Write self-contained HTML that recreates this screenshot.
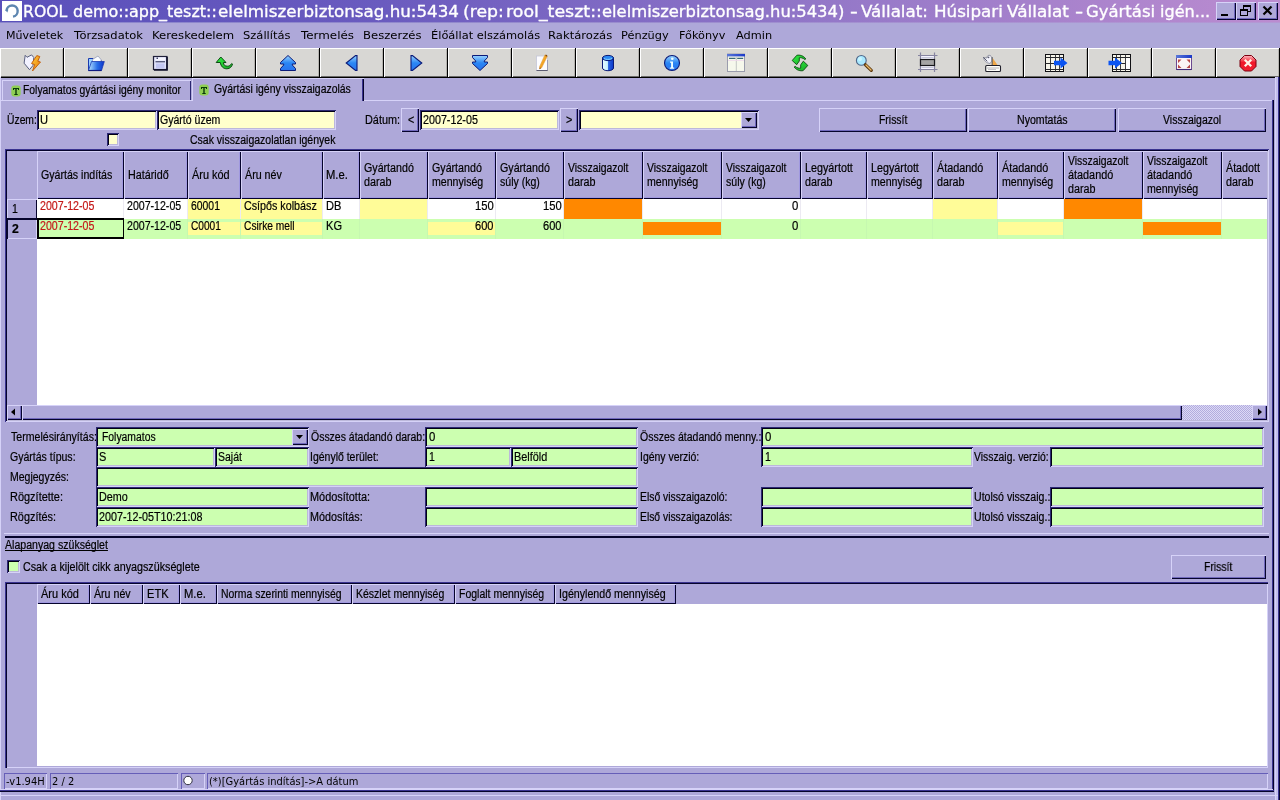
<!DOCTYPE html>
<html lang="hu"><head><meta charset="utf-8"><title>ROOL demo</title>
<style>
html,body{margin:0;padding:0}
body{width:1280px;height:800px;overflow:hidden;background:#aea8d9;position:relative;font:12px/14px "Liberation Sans",sans-serif;color:#000}
.a{position:absolute;box-sizing:border-box}
.t{position:absolute;white-space:nowrap;transform-origin:0 0;-webkit-text-stroke:.2px currentColor}
#w{position:absolute;left:0;top:0;width:1280px;height:800px;will-change:transform}
.m{position:absolute;white-space:nowrap;font:11px/14px "DejaVu Sans","Liberation Sans",sans-serif;transform-origin:0 0}
.s{position:absolute;white-space:nowrap;font:11px/14px "DejaVu Sans","Liberation Sans",sans-serif;transform:scaleX(.9);transform-origin:0 0}
.sunk{box-shadow:inset 1px 1px 0 #2c2874,inset -1px -1px 0 #d6d2f8,inset 2px 2px 0 #020014,inset -2px -2px 0 #bcb8da}
.btn{box-shadow:inset 1px 1px 0 #d6d2f8,inset -1px -1px 0 #06042c,inset -2px -2px 0 #7068bc}
.hd{box-shadow:inset 1px 1px 0 #d6d2f8,inset -1px -1px 0 #06042c,inset -2px -2px 0 #a098e0}
.tb{background:#d8d7d4;box-shadow:inset 0 -1px 0 #000,inset -1px 0 0 #000,inset 1px 1px 0 #fff,inset 0 -2px 0 #6a6a68,inset -2px 0 0 #b4b2ae}
.tb svg{position:absolute}
svg{display:block}
.ti{position:absolute;white-space:nowrap;color:#fff;font:16.5px/20px "DejaVu Sans","Liberation Sans",sans-serif;transform-origin:0 0;-webkit-text-stroke:.35px #fff}
</style></head>
<body>
<div id="w">
<div class="a" style="left:0px;top:0px;width:1280px;height:22px;background:linear-gradient(90deg,#5a50bb 0%,#6a5bbf 30%,#9478c8 65%,#bb8cd0 100%);"></div>
<div class="a" style="left:2px;top:1px;width:20px;height:20px;background:#fff;"><svg width="20" height="20" viewBox="0 0 20 20"><path d="M4.5 9.5A5.6 5.6 0 1 1 11 15.6" fill="none" stroke="#5d86b0" stroke-width="2.4"/><path d="M3 9l3.4-.4-1 3z" fill="#5d86b0"/></svg></div>
<div class="a" style="left:0;top:0;width:1216px;height:22px">
<span class="ti" style="left:22.53px;top:2px;transform:scaleX(0.9511);">ROOL</span>
<span class="ti" style="left:73.13px;top:2px;transform:scaleX(0.9671);">demo::app_teszt::</span>
<span class="ti" style="left:217.59px;top:2px;transform:scaleX(1.0127);">elelmiszerbiztonsag.hu:5434</span>
<span class="ti" style="left:462.79px;top:2px;transform:scaleX(1.0476);">(rep:</span>
<span class="ti" style="left:506.22px;top:2px;transform:scaleX(1.0543);">rool_teszt::</span>
<span class="ti" style="left:602.01px;top:2px;transform:scaleX(0.9913);">elelmiszerbiztonsag.hu:5434)</span>
<span class="ti" style="left:850.32px;top:2px;transform:scaleX(1.3103);">-</span>
<span class="ti" style="left:861.45px;top:2px;transform:scaleX(1.0117);">Vállalat:</span>
<span class="ti" style="left:933.73px;top:2px;transform:scaleX(1.0123);">Húsipari</span>
<span class="ti" style="left:1007.45px;top:2px;transform:scaleX(1.0208);">Vállalat</span>
<span class="ti" style="left:1075.37px;top:2px;transform:scaleX(1.3793);">-</span>
<span class="ti" style="left:1086.10px;top:2px;transform:scaleX(0.9978);">Gyártási</span>
<span class="ti" style="left:1159.54px;top:2px;transform:scaleX(0.9761);">igén...</span>
</div>
<div class="a btn" style="left:1216px;top:2px;width:20px;height:18px;background:#aea8d9;"><svg width="20" height="18" viewBox="0 0 20 18"><rect x="5" y="12" width="7" height="2" fill="#000"/></svg></div>
<div class="a btn" style="left:1236px;top:2px;width:20px;height:18px;background:#aea8d9;"><svg width="20" height="18" viewBox="0 0 20 18"><rect x="7.5" y="3.5" width="7" height="6" fill="none" stroke="#000"/><rect x="7" y="3" width="8" height="2" fill="#000"/><rect x="4.5" y="7.5" width="7" height="6" fill="#aea8d9" stroke="#000"/><rect x="4" y="7" width="8" height="2" fill="#000"/></svg></div>
<div class="a btn" style="left:1258px;top:2px;width:20px;height:18px;background:#aea8d9;"><svg width="20" height="18" viewBox="0 0 20 18"><path d="M5.5 4.5l8 8M13.5 4.5l-8 8" stroke="#000" stroke-width="2.2" fill="none"/></svg></div>
<span class="m" style="left:5.90px;top:29px;transform:scaleX(1.0036);">Műveletek</span>
<span class="m" style="left:74.25px;top:29px;transform:scaleX(1.0448);">Törzsadatok</span>
<span class="m" style="left:152.08px;top:29px;transform:scaleX(1.0638);">Kereskedelem</span>
<span class="m" style="left:243.02px;top:29px;transform:scaleX(1.0464);">Szállítás</span>
<span class="m" style="left:301.25px;top:29px;transform:scaleX(1.0825);">Termelés</span>
<span class="m" style="left:363.34px;top:29px;transform:scaleX(1.0568);">Beszerzés</span>
<span class="m" style="left:430.61px;top:29px;transform:scaleX(1.0376);">Élőállat elszámolás</span>
<span class="m" style="left:548.34px;top:29px;transform:scaleX(1.0557);">Raktározás</span>
<span class="m" style="left:621.36px;top:29px;transform:scaleX(1.0324);">Pénzügy</span>
<span class="m" style="left:678.88px;top:29px;transform:scaleX(1.0227);">Főkönyv</span>
<span class="m" style="left:736.15px;top:29px;transform:scaleX(1.0294);">Admin</span>
<svg width="0" height="0" style="position:absolute"><defs>
<linearGradient id="gb" x1="0" y1="0" x2="0" y2="1"><stop offset="0" stop-color="#9ad4ff"/><stop offset=".5" stop-color="#2a86f4"/><stop offset="1" stop-color="#2a74ee"/></linearGradient>
<linearGradient id="gg" x1="0" y1="0" x2="1" y2="1"><stop offset="0" stop-color="#30f040"/><stop offset="1" stop-color="#18a828"/></linearGradient>
<linearGradient id="go" x1="0" y1="0" x2="1" y2="1"><stop offset="0" stop-color="#ffd040"/><stop offset="1" stop-color="#e87808"/></linearGradient>
<linearGradient id="gr" x1="0" y1="0" x2="0" y2="1"><stop offset="0" stop-color="#ffb8c0"/><stop offset=".45" stop-color="#f01828"/><stop offset="1" stop-color="#f02030"/></linearGradient>
<linearGradient id="gf" x1="0" y1="0" x2="1" y2="0"><stop offset="0" stop-color="#b8e4ff"/><stop offset=".55" stop-color="#2a70e8"/><stop offset="1" stop-color="#0a30c8"/></linearGradient>
<linearGradient id="gc" x1="0" y1="0" x2="1" y2="0"><stop offset="0" stop-color="#e8faff"/><stop offset=".45" stop-color="#c8f0ff"/><stop offset=".55" stop-color="#2a60e0"/><stop offset="1" stop-color="#0a38c8"/></linearGradient>
<linearGradient id="gt" x1="0" y1="0" x2="1" y2="0"><stop offset="0" stop-color="#5a78d8"/><stop offset="1" stop-color="#1a38c8"/></linearGradient>
</defs></svg>
<div class="a tb" style="left:0px;top:48px;width:64px;height:30px;"><svg width="64" height="29" viewBox="0 48 64 29" style="left:0;top:0"><path d="M25.200 55.300l1.800 2 4.600-2.400 2.200 2.600-0.900 8.100-3.400 4.100-5.400-6.500z" fill="#f2f2ff" stroke="#5a6080" stroke-width="1"/><path d="M36.800 55.600l3 .9-2 4.700 2.700.800-8 9 2.200-6.500-3.200-1z" fill="url(#go)" stroke="#c05808" stroke-width=".9"/></svg></div>
<div class="a tb" style="left:64px;top:48px;width:64px;height:30px;"><svg width="64" height="29" viewBox="64 48 64 29" style="left:0;top:0"><path d="M88.500 58.500h4.500l1 1.500h7v10.500h-12.500z" fill="#9ad0ff" stroke="#1a3ab0"/><path d="M92.500 59.500l5.500-3.500 3 3.500v3h-8.500z" fill="#fafcff" stroke="#8a90b0" stroke-width=".7"/><path d="M91.500 61.500h12.800l-2.800 9h-13z" fill="url(#gf)" stroke="#1a3ab0" stroke-width=".8"/><path d="M88.500 70.500h13" stroke="#101a80" stroke-width="1.200"/></svg></div>
<div class="a tb" style="left:128px;top:48px;width:64px;height:30px;"><svg width="64" height="29" viewBox="128 48 64 29" style="left:0;top:0"><rect x="153.500" y="56.500" width="13.500" height="13" fill="#dfe2fa" stroke="#20203a" stroke-width="1.200"/><path d="M167 57v13h-13" fill="none" stroke="#10102a" stroke-width="1.600"/><rect x="155.500" y="57.500" width="9.500" height="3" fill="#f6f6ff"/><rect x="155.500" y="61" width="9.500" height="1.400" fill="#5a5e80"/><rect x="156" y="63.500" width="8.500" height="5" fill="#c2c6f2"/><rect x="156.500" y="57.500" width="1.500" height="1.500" fill="#40446a"/></svg></div>
<div class="a tb" style="left:192px;top:48px;width:64px;height:30px;"><svg width="64" height="29" viewBox="192 48 64 29" style="left:0;top:0"><path d="M220.800 57l5.200 5.500h-2.600c.2 2.600 1.600 3.700 4 3.700 1.800 0 3-.9 4.300-2.700l.8.600c-.6 2.600-2.600 4.700-5.600 4.700-3.600 0-5.900-2.300-6.600-6.300h-4.100z" fill="url(#gg)" stroke="#0a4a10" stroke-width="1"/></svg></div>
<div class="a tb" style="left:256px;top:48px;width:64px;height:30px;"><svg width="64" height="29" viewBox="256 48 64 29" style="left:0;top:0"><path d="M288 55.500l7.500 7v1.500h-3.200v1l3.200 3.500v2h-15v-2l3.200-3.500v-1h-3.200v-1.500z" fill="url(#gb)" stroke="#0a1a78" stroke-width="1"/></svg></div>
<div class="a tb" style="left:320px;top:48px;width:64px;height:30px;"><svg width="64" height="29" viewBox="320 48 64 29" style="left:0;top:0"><path d="M357 55.600v14.800h-1.500l-9.300-7.400 9.300-7.400z" fill="url(#gb)" stroke="#0a1a78" stroke-width="1.100"/></svg></div>
<div class="a tb" style="left:384px;top:48px;width:64px;height:30px;"><svg width="64" height="29" viewBox="384 48 64 29" style="left:0;top:0"><path d="M411 55.600v14.800h1.500l9.300-7.400-9.300-7.400z" fill="url(#gb)" stroke="#0a1a78" stroke-width="1.100"/></svg></div>
<div class="a tb" style="left:448px;top:48px;width:64px;height:30px;"><svg width="64" height="29" viewBox="448 48 64 29" style="left:0;top:0"><path d="M480 70.500l-7.500-7v-1.500h3.200v-1l-3.200-3.500v-2h15v2l-3.200 3.500v1h3.200v1.500z" fill="url(#gb)" stroke="#0a1a78" stroke-width="1"/></svg></div>
<div class="a tb" style="left:512px;top:48px;width:64px;height:30px;"><svg width="64" height="29" viewBox="512 48 64 29" style="left:0;top:0"><rect x="536.500" y="56" width="11" height="14.500" fill="#fcfcff" stroke="#c4c6d8" stroke-width=".8"/><path d="M536.500 70.500h11.500" stroke="#5a5a70" stroke-width="1"/><path d="M547.500 60v10.500" stroke="#9a9cb8" stroke-width="1"/><path d="M545 54.800l2.400 1.200-5.800 11.800-2 1.200.1-2.600z" fill="url(#go)" stroke="#e09838" stroke-width=".6"/><path d="M539.600 69l.2-1.600 1.200.6z" fill="#5a3010"/><circle cx="546.300" cy="55.600" r=".9" fill="#7a4818"/></svg></div>
<div class="a tb" style="left:576px;top:48px;width:64px;height:30px;"><svg width="64" height="29" viewBox="576 48 64 29" style="left:0;top:0"><path d="M602.500 58v10c0 1.600 2.400 2.700 5.500 2.700s5.500-1.100 5.500-2.700v-10z" fill="url(#gc)" stroke="#0a1a78" stroke-width="1"/><ellipse cx="608" cy="58" rx="5.500" ry="2.600" fill="#2a88f4" stroke="#0a1a78" stroke-width="1"/><path d="M604 58.500c1.500 1.200 6 1.300 8 0" stroke="#8ad0ff" stroke-width="1" fill="none"/></svg></div>
<div class="a tb" style="left:640px;top:48px;width:64px;height:30px;"><svg width="64" height="29" viewBox="640 48 64 29" style="left:0;top:0"><circle cx="672" cy="63" r="7.500" fill="url(#gb)" stroke="#0a1a78" stroke-width="1.100"/><path d="M670 61.500h3v6h1.200v1.200h-4.400v-1.200h1.300v-4.800h-1.100z" fill="#f0ffff"/><circle cx="672.300" cy="58.800" r="1.300" fill="#f0ffff"/></svg></div>
<div class="a tb" style="left:704px;top:48px;width:64px;height:30px;"><svg width="64" height="29" viewBox="704 48 64 29" style="left:0;top:0"><rect x="727.500" y="54" width="17" height="17.500" fill="#f6f8ec" stroke="#9a9cac" stroke-width="1"/><rect x="727" y="54" width="18" height="2.400" fill="url(#gt)"/><path d="M729 58.400h6.500M737.200 58.400h6" stroke="#3a6a78" stroke-width="1.200"/><path d="M736.300 57v14" stroke="#b8baba" stroke-width=".8"/><path d="M728 60.500h16" stroke="#f0d8ec" stroke-width=".8"/></svg></div>
<div class="a tb" style="left:768px;top:48px;width:64px;height:30px;"><svg width="64" height="29" viewBox="768 48 64 29" style="left:0;top:0"><path d="M792.200 60.500l4.600-5.200c2.600-.6 6.600.2 9 3.600l-.9.700c-2-1.800-4.200-2.200-5.600-1.800l0 3.200-2.600 3.700z" fill="url(#gg)" stroke="#0a4a10" stroke-width=".9"/><path d="M807.800 65.400l-4.600 5.200c-2.600.6-6.600-.2-9-3.600l.9-.7c2 1.800 4.200 2.200 5.600 1.800l0-3.200 2.600-3.700z" fill="url(#gg)" stroke="#0a4a10" stroke-width=".9"/></svg></div>
<div class="a tb" style="left:832px;top:48px;width:64px;height:30px;"><svg width="64" height="29" viewBox="832 48 64 29" style="left:0;top:0"><circle cx="861.300" cy="60.400" r="4.900" fill="#a8e8ff" stroke="#50688a" stroke-width="1.100"/><circle cx="860" cy="59" r="2" fill="#d8fbff" opacity=".7"/><path d="M865.500 64.800l5.800 5.600" stroke="#5a3408" stroke-width="3.200" stroke-linecap="round"/><path d="M866 65l5 4.900" stroke="#e8b868" stroke-width="1.400" stroke-linecap="round"/></svg></div>
<div class="a tb" style="left:896px;top:48px;width:64px;height:30px;"><svg width="64" height="29" viewBox="896 48 64 29" style="left:0;top:0"><rect x="921" y="56" width="13.500" height="13.500" fill="#f4f4ff"/><path d="M920.500 52.500v19.500M934.500 52.500v19.500M918 55.500h19.500M918 69.500h19.500" stroke="#8684a0" stroke-width="1.200"/><path d="M921.500 57.500h12M921.500 67.500h12" stroke="#c8c8dc" stroke-width="1"/><rect x="920.500" y="59.500" width="14" height="6" fill="#a4a4a4" stroke="#18181c" stroke-width="1.200"/></svg></div>
<div class="a tb" style="left:960px;top:48px;width:64px;height:30px;"><svg width="64" height="29" viewBox="960 48 64 29" style="left:0;top:0"><path d="M983.500 57.500c.5 3 2.500 5.500 6.500 6 2-1.500 2.500-5 .5-8-2.500-.8-3.500.5-3.500 2.500z" fill="#f4f4fc" stroke="#8a8c9c" stroke-width=".9"/><path d="M983.300 57.300l4 4" stroke="#5a5c6c" stroke-width="1"/><circle cx="988.500" cy="57.300" r=".9" fill="#5a5c70"/><path d="M992.300 57.500l5.200 7.500h-5.800z" fill="#f0a848"/><path d="M992.200 57v8" stroke="#5a6068" stroke-width="1"/><rect x="985.700" y="65.500" width="14.800" height="6" rx="1" fill="#fffffa" stroke="#20202a" stroke-width="1.100"/><path d="M987.500 68h11" stroke="#6a6a7a" stroke-width="1" stroke-dasharray="1 1"/><path d="M988.500 69.500h7" stroke="#8a8a9a" stroke-width="1" stroke-dasharray="1 1"/></svg></div>
<div class="a tb" style="left:1024px;top:48px;width:64px;height:30px;"><svg width="64" height="29" viewBox="1024 48 64 29" style="left:0;top:0"><rect x="1045.500" y="54.500" width="18" height="17" fill="#f6f4ea" stroke="#101014" stroke-width="1"/><path d="M1045.500 57.500h18M1045.500 63.500h18M1045.500 69.500h18" stroke="#28282c" stroke-width="1"/><path d="M1050.500 54.500v17M1055.500 54.500v17M1059.500 54.500v17" stroke="#28282c" stroke-width=".9"/><path d="M1054 60.800h6.500v-3.300l7 5.500-7 5.500v-3.300h-6.500z" fill="#0a54f2"/></svg></div>
<div class="a tb" style="left:1088px;top:48px;width:64px;height:30px;"><svg width="64" height="29" viewBox="1088 48 64 29" style="left:0;top:0"><rect x="1112.500" y="54.500" width="18" height="17" fill="#f6f4ea" stroke="#101014" stroke-width="1"/><path d="M1112.500 57.500h18M1112.500 63.500h13M1112.500 69.500h18" stroke="#28282c" stroke-width="1"/><path d="M1116.500 54.500v17M1120.500 54.500v17M1125.500 54.500v17" stroke="#28282c" stroke-width=".9"/><rect x="1126" y="58" width="4" height="11" fill="#fff"/><path d="M1108.500 60.800h6.500v-3.300l7 5.500-7 5.500v-3.300h-6.500z" fill="#0a54f2"/></svg></div>
<div class="a tb" style="left:1152px;top:48px;width:64px;height:30px;"><svg width="64" height="29" viewBox="1152 48 64 29" style="left:0;top:0"><rect x="1176.500" y="55.500" width="15" height="14" fill="#fcf4f6" stroke="#6a4a90" stroke-width="1"/><rect x="1176" y="55" width="16" height="3" fill="url(#gt)"/><path d="M1178 59.500h3.500l-3.500 3.500zM1190 59.500h-3.500l3.500 3.500zM1178 68h3.500l-3.500-3.500zM1190 68h-3.500l3.500-3.500z" fill="#b84848"/><path d="M1176.500 69.500h15" stroke="#402878" stroke-width="1.100"/></svg></div>
<div class="a tb" style="left:1216px;top:48px;width:64px;height:30px;"><svg width="64" height="29" viewBox="1216 48 64 29" style="left:0;top:0"><path d="M1244.500 55.500h7l4.500 4.500v6.500l-4.500 4.500h-7l-4.500-4.500v-6.500z" fill="url(#gr)" stroke="#7a0010" stroke-width="1"/><path d="M1244.800 59.800l6.400 6.400M1251.200 59.800l-6.400 6.400" stroke="#fff4e8" stroke-width="2.300"/></svg></div>
<!--BODY-->
<div class="a" style="left:0px;top:22px;width:1280px;height:1px;background:linear-gradient(90deg,#8a84cc 0%,#9088cc 30%,#a290d0 65%,#b498d4 100%);"></div>
<div class="a" style="left:0px;top:77px;width:1px;height:723px;background:#d6d2f8;"></div>
<div class="a" style="left:1275px;top:77px;width:1px;height:723px;background:#d6d2f8;"></div>
<div class="a" style="left:1276px;top:77px;width:2px;height:723px;background:#c2beec;"></div>
<div class="a" style="left:1278px;top:77px;width:1px;height:723px;background:#3a3390;"></div>
<div class="a" style="left:1279px;top:77px;width:1px;height:723px;background:#06042c;"></div>
<div class="a" style="left:0px;top:100px;width:1273px;height:1px;background:#d6d2f8;"></div>
<div class="a" style="left:1272px;top:100px;width:1px;height:691px;background:#3a3390;"></div>
<div class="a" style="left:1273px;top:100px;width:1px;height:691px;background:#06042c;"></div>
<div class="a" style="left:0px;top:789px;width:1273px;height:1px;background:#d6d2f8;"></div>
<div class="a" style="left:0px;top:790px;width:1274px;height:1px;background:#3a3390;"></div>
<div class="a" style="left:0px;top:791px;width:1274px;height:1px;background:#06042c;"></div>
<div class="a" style="left:0px;top:795px;width:1278px;height:1px;background:#d6d2f8;"></div>
<div class="a" style="left:2px;top:80px;width:189px;height:20px;background:#aea8d9;box-shadow:inset 1px 1px 0 #d6d2f8,inset -1px 0 0 #2a2670;"></div>
<div class="a" style="left:11px;top:85px;width:10px;height:12px;"><svg width="10" height="12" viewBox="0 0 10 12"><rect x=".3" y=".5" width="9.400" height="11" rx="3" fill="#8fce54"/><path d="M2 3h6v2h-1v-1h-1.300v5h1v1h-3.400v-1h1v-5h-1.300v1h-1z" fill="#0a3a0a"/></svg></div>
<span class="t" style="left:22.74px;top:83px;transform:scaleX(0.8645);">Folyamatos gyártási igény monitor</span>
<div class="a" style="left:192px;top:78px;width:172px;height:23px;background:#aea8d9;box-shadow:inset 1px 1px 0 #d6d2f8,inset -1px 0 0 #06042c,inset -2px 0 0 #3a3390;"></div>
<div class="a" style="left:199px;top:84px;width:10px;height:12px;"><svg width="10" height="12" viewBox="0 0 10 12"><rect x=".3" y=".5" width="9.400" height="11" rx="3" fill="#8fce54"/><path d="M2 3h6v2h-1v-1h-1.300v5h1v1h-3.400v-1h1v-5h-1.300v1h-1z" fill="#0a3a0a"/></svg></div>
<span class="t" style="left:214.08px;top:82px;transform:scaleX(0.8689);">Gyártási igény visszaigazolás</span>
<span class="t" style="left:7.33px;top:113px;transform:scaleX(0.8609);">Üzem:</span>
<div class="a sunk" style="left:37px;top:110px;width:120px;height:20px;background:#ffffcc;"></div>
<span class="t" style="left:40.02px;top:113px;transform:scaleX(0.9275);">U</span>
<div class="a sunk" style="left:157px;top:110px;width:179px;height:20px;background:#ffffcc;"></div>
<span class="t" style="left:159.82px;top:113px;transform:scaleX(0.8789);">Gyártó üzem</span>
<span class="t" style="left:365.44px;top:113px;transform:scaleX(0.9057);">Dátum:</span>
<div class="a btn" style="left:401px;top:108px;width:18px;height:24px;background:#aea8d9;"></div>
<span class="t" style="left:407.56px;top:113px;transform:scaleX(0.8966);">&lt;</span>
<div class="a sunk" style="left:420px;top:110px;width:139px;height:20px;background:#ffffcc;"></div>
<span class="t" style="left:423.06px;top:113px;transform:scaleX(0.8939);">2007-12-05</span>
<div class="a btn" style="left:560px;top:108px;width:18px;height:24px;background:#aea8d9;"></div>
<span class="t" style="left:565.56px;top:113px;transform:scaleX(0.8966);">&gt;</span>
<div class="a sunk" style="left:579px;top:110px;width:180px;height:20px;background:#ffffcc;"></div>
<div class="a btn" style="left:741px;top:112px;width:16px;height:16px;background:#aea8d9;"><svg width="16" height="16" viewBox="0 0 16 16"><path d="M4 6h7l-3.500 4z" fill="#000"/></svg></div>
<div class="a btn" style="left:819px;top:108px;width:148px;height:24px;background:#aea8d9;"></div>
<span class="t" style="left:878.73px;top:113px;transform:scaleX(0.8671);">Frissít</span>
<div class="a btn" style="left:968px;top:108px;width:148px;height:24px;background:#aea8d9;"></div>
<span class="t" style="left:1016.72px;top:113px;transform:scaleX(0.8821);">Nyomtatás</span>
<div class="a btn" style="left:1118px;top:108px;width:148px;height:24px;background:#aea8d9;"></div>
<span class="t" style="left:1163.01px;top:113px;transform:scaleX(0.8750);">Visszaigazol</span>
<div class="a sunk" style="left:107px;top:133px;width:12px;height:13px;background:#ffffcc;"></div>
<span class="t" style="left:190.07px;top:133px;transform:scaleX(0.8755);">Csak visszaigazolatlan igények</span>
<div class="a" style="left:5px;top:149px;width:1264px;height:273px;background:#aea8d9;box-shadow:inset 1px 1px 0 #3a3390,inset -1px -1px 0 #d6d2f8,inset 2px 2px 0 #06042c,inset -2px -2px 0 #bcb8da;"></div>
<div class="a" style="left:37px;top:199px;width:1230px;height:206px;background:#fff;"></div>
<div class="a" style="left:7px;top:151px;width:30px;height:48px;background:#aea8d9;"></div>
<div class="a hd" style="left:37px;top:151px;width:87px;height:48px;background:#aea8d9;"></div>
<span class="t" style="left:40.87px;top:168px;transform:scaleX(0.8833);">Gyártás indítás</span>
<div class="a hd" style="left:124px;top:151px;width:64px;height:48px;background:#aea8d9;"></div>
<span class="t" style="left:127.50px;top:168px;transform:scaleX(0.8975);">Határidő</span>
<div class="a hd" style="left:188px;top:151px;width:53px;height:48px;background:#aea8d9;"></div>
<span class="t" style="left:192.40px;top:168px;transform:scaleX(0.9089);">Áru kód</span>
<div class="a hd" style="left:241px;top:151px;width:82px;height:48px;background:#aea8d9;"></div>
<span class="t" style="left:245.40px;top:168px;transform:scaleX(0.8913);">Áru név</span>
<div class="a hd" style="left:323px;top:151px;width:37px;height:48px;background:#aea8d9;"></div>
<span class="t" style="left:326.47px;top:168px;transform:scaleX(0.9343);">M.e.</span>
<div class="a hd" style="left:360px;top:151px;width:68px;height:48px;background:#aea8d9;"></div>
<span class="t" style="left:363.87px;top:161px;transform:scaleX(0.8891);">Gyártandó</span>
<span class="t" style="left:363.95px;top:175px;transform:scaleX(0.8956);">darab</span>
<div class="a hd" style="left:428px;top:151px;width:68px;height:48px;background:#aea8d9;"></div>
<span class="t" style="left:431.87px;top:161px;transform:scaleX(0.8891);">Gyártandó</span>
<span class="t" style="left:431.69px;top:175px;transform:scaleX(0.8832);">mennyiség</span>
<div class="a hd" style="left:496px;top:151px;width:68px;height:48px;background:#aea8d9;"></div>
<span class="t" style="left:499.87px;top:161px;transform:scaleX(0.8891);">Gyártandó</span>
<span class="t" style="left:500.14px;top:175px;transform:scaleX(0.8781);">súly (kg)</span>
<div class="a hd" style="left:564px;top:151px;width:79px;height:48px;background:#aea8d9;"></div>
<span class="t" style="left:568.31px;top:161px;transform:scaleX(0.8666);">Visszaigazolt</span>
<span class="t" style="left:567.95px;top:175px;transform:scaleX(0.8956);">darab</span>
<div class="a hd" style="left:643px;top:151px;width:79px;height:48px;background:#aea8d9;"></div>
<span class="t" style="left:647.31px;top:161px;transform:scaleX(0.8666);">Visszaigazolt</span>
<span class="t" style="left:646.69px;top:175px;transform:scaleX(0.8832);">mennyiség</span>
<div class="a hd" style="left:722px;top:151px;width:79px;height:48px;background:#aea8d9;"></div>
<span class="t" style="left:726.31px;top:161px;transform:scaleX(0.8666);">Visszaigazolt</span>
<span class="t" style="left:726.14px;top:175px;transform:scaleX(0.8781);">súly (kg)</span>
<div class="a hd" style="left:801px;top:151px;width:66px;height:48px;background:#aea8d9;"></div>
<span class="t" style="left:804.50px;top:161px;transform:scaleX(0.8967);">Legyártott</span>
<span class="t" style="left:804.95px;top:175px;transform:scaleX(0.8956);">darab</span>
<div class="a hd" style="left:867px;top:151px;width:66px;height:48px;background:#aea8d9;"></div>
<span class="t" style="left:870.50px;top:161px;transform:scaleX(0.8967);">Legyártott</span>
<span class="t" style="left:870.69px;top:175px;transform:scaleX(0.8832);">mennyiség</span>
<div class="a hd" style="left:933px;top:151px;width:65px;height:48px;background:#aea8d9;"></div>
<span class="t" style="left:937.40px;top:161px;transform:scaleX(0.9018);">Átadandó</span>
<span class="t" style="left:936.95px;top:175px;transform:scaleX(0.8956);">darab</span>
<div class="a hd" style="left:998px;top:151px;width:66px;height:48px;background:#aea8d9;"></div>
<span class="t" style="left:1002.40px;top:161px;transform:scaleX(0.9018);">Átadandó</span>
<span class="t" style="left:1001.69px;top:175px;transform:scaleX(0.8832);">mennyiség</span>
<div class="a hd" style="left:1064px;top:151px;width:79px;height:48px;background:#aea8d9;"></div>
<span class="t" style="left:1068.31px;top:154px;transform:scaleX(0.8666);">Visszaigazolt</span>
<span class="t" style="left:1067.95px;top:168px;transform:scaleX(0.9043);">átadandó</span>
<span class="t" style="left:1067.95px;top:182px;transform:scaleX(0.8956);">darab</span>
<div class="a hd" style="left:1143px;top:151px;width:79px;height:48px;background:#aea8d9;"></div>
<span class="t" style="left:1147.31px;top:154px;transform:scaleX(0.8666);">Visszaigazolt</span>
<span class="t" style="left:1146.95px;top:168px;transform:scaleX(0.9043);">átadandó</span>
<span class="t" style="left:1146.69px;top:182px;transform:scaleX(0.8832);">mennyiség</span>
<div class="a" style="left:1222px;top:151px;width:45px;height:48px;background:#aea8d9;box-shadow:inset 1px 1px 0 #d6d2f8,inset 0 -1px 0 #06042c,inset 0 -2px 0 #a098e0;"></div>
<span class="t" style="left:1226.40px;top:161px;transform:scaleX(0.8921);">Átadott</span>
<span class="t" style="left:1225.95px;top:175px;transform:scaleX(0.8956);">darab</span>
<div class="a" style="left:37px;top:219px;width:1230px;height:20px;background:#ccffb0;"></div>
<div class="a" style="left:123px;top:199px;width:1px;height:20px;background:#eceaf2;"></div>
<div class="a" style="left:123px;top:219px;width:1px;height:20px;background:#c6f8b0;"></div>
<div class="a" style="left:187px;top:199px;width:1px;height:20px;background:#eceaf2;"></div>
<div class="a" style="left:187px;top:219px;width:1px;height:20px;background:#c6f8b0;"></div>
<div class="a" style="left:240px;top:199px;width:1px;height:20px;background:#eceaf2;"></div>
<div class="a" style="left:240px;top:219px;width:1px;height:20px;background:#c6f8b0;"></div>
<div class="a" style="left:322px;top:199px;width:1px;height:20px;background:#eceaf2;"></div>
<div class="a" style="left:322px;top:219px;width:1px;height:20px;background:#c6f8b0;"></div>
<div class="a" style="left:359px;top:199px;width:1px;height:20px;background:#eceaf2;"></div>
<div class="a" style="left:359px;top:219px;width:1px;height:20px;background:#c6f8b0;"></div>
<div class="a" style="left:427px;top:199px;width:1px;height:20px;background:#eceaf2;"></div>
<div class="a" style="left:427px;top:219px;width:1px;height:20px;background:#c6f8b0;"></div>
<div class="a" style="left:495px;top:199px;width:1px;height:20px;background:#eceaf2;"></div>
<div class="a" style="left:495px;top:219px;width:1px;height:20px;background:#c6f8b0;"></div>
<div class="a" style="left:563px;top:199px;width:1px;height:20px;background:#eceaf2;"></div>
<div class="a" style="left:563px;top:219px;width:1px;height:20px;background:#c6f8b0;"></div>
<div class="a" style="left:642px;top:199px;width:1px;height:20px;background:#eceaf2;"></div>
<div class="a" style="left:642px;top:219px;width:1px;height:20px;background:#c6f8b0;"></div>
<div class="a" style="left:721px;top:199px;width:1px;height:20px;background:#eceaf2;"></div>
<div class="a" style="left:721px;top:219px;width:1px;height:20px;background:#c6f8b0;"></div>
<div class="a" style="left:800px;top:199px;width:1px;height:20px;background:#eceaf2;"></div>
<div class="a" style="left:800px;top:219px;width:1px;height:20px;background:#c6f8b0;"></div>
<div class="a" style="left:866px;top:199px;width:1px;height:20px;background:#eceaf2;"></div>
<div class="a" style="left:866px;top:219px;width:1px;height:20px;background:#c6f8b0;"></div>
<div class="a" style="left:932px;top:199px;width:1px;height:20px;background:#eceaf2;"></div>
<div class="a" style="left:932px;top:219px;width:1px;height:20px;background:#c6f8b0;"></div>
<div class="a" style="left:997px;top:199px;width:1px;height:20px;background:#eceaf2;"></div>
<div class="a" style="left:997px;top:219px;width:1px;height:20px;background:#c6f8b0;"></div>
<div class="a" style="left:1063px;top:199px;width:1px;height:20px;background:#eceaf2;"></div>
<div class="a" style="left:1063px;top:219px;width:1px;height:20px;background:#c6f8b0;"></div>
<div class="a" style="left:1142px;top:199px;width:1px;height:20px;background:#eceaf2;"></div>
<div class="a" style="left:1142px;top:219px;width:1px;height:20px;background:#c6f8b0;"></div>
<div class="a" style="left:1221px;top:199px;width:1px;height:20px;background:#eceaf2;"></div>
<div class="a" style="left:1221px;top:219px;width:1px;height:20px;background:#c6f8b0;"></div>
<span class="t" style="left:40.37px;top:199px;transform:scaleX(0.8856);color:#c41818;">2007-12-05</span>
<span class="t" style="left:127.37px;top:199px;transform:scaleX(0.8823);">2007-12-05</span>
<div class="a" style="left:188px;top:199px;width:52px;height:20px;background:#fffc98;"></div>
<span class="t" style="left:191.38px;top:199px;transform:scaleX(0.8665);">60001</span>
<div class="a" style="left:241px;top:199px;width:81px;height:20px;background:#fffc98;"></div>
<span class="t" style="left:244.36px;top:199px;transform:scaleX(0.8940);">Csípős kolbász</span>
<span class="t" style="left:325.98px;top:199px;transform:scaleX(0.9205);">DB</span>
<div class="a" style="left:360px;top:199px;width:67px;height:20px;background:#fffc98;"></div>
<span class="t" style="left:474.76px;top:199px;transform:scaleX(0.9355);">150</span>
<span class="t" style="left:542.76px;top:199px;transform:scaleX(0.9355);">150</span>
<div class="a" style="left:564px;top:199px;width:78px;height:20px;background:#ff8800;"></div>
<span class="t" style="left:792.13px;top:199px;transform:scaleX(0.9474);">0</span>
<div class="a" style="left:933px;top:199px;width:64px;height:20px;background:#fffc98;"></div>
<div class="a" style="left:1064px;top:199px;width:78px;height:20px;background:#ff8800;"></div>
<span class="t" style="left:40.37px;top:219px;transform:scaleX(0.8856);color:#c41818;">2007-12-05</span>
<span class="t" style="left:127.37px;top:219px;transform:scaleX(0.8823);">2007-12-05</span>
<div class="a" style="left:188px;top:222px;width:52px;height:13px;background:#fffc98;"></div>
<span class="t" style="left:191.39px;top:219px;transform:scaleX(0.8450);">C0001</span>
<div class="a" style="left:241px;top:222px;width:81px;height:13px;background:#fffc98;"></div>
<span class="t" style="left:244.39px;top:219px;transform:scaleX(0.8517);">Csirke mell</span>
<span class="t" style="left:325.98px;top:219px;transform:scaleX(0.9221);">KG</span>
<div class="a" style="left:428px;top:222px;width:67px;height:13px;background:#fffc98;"></div>
<span class="t" style="left:475.05px;top:219px;transform:scaleX(0.9206);">600</span>
<span class="t" style="left:543.05px;top:219px;transform:scaleX(0.9206);">600</span>
<div class="a" style="left:643px;top:222px;width:78px;height:13px;background:#ff8800;"></div>
<span class="t" style="left:792.13px;top:219px;transform:scaleX(0.9474);">0</span>
<div class="a" style="left:998px;top:222px;width:65px;height:13px;background:#fffc98;"></div>
<div class="a" style="left:1143px;top:222px;width:78px;height:13px;background:#ff8800;"></div>
<div class="a" style="left:37px;top:218px;width:87px;height:21px;border:2px solid #000;border-right-width:1px;"></div>
<div class="a" style="left:7px;top:199px;width:30px;height:19px;background:#aea8d9;box-shadow:inset 1px 1px 0 #d6d2f8,inset -1px 0 0 #06042c;"></div>
<div class="a" style="left:6px;top:218px;width:31px;height:21px;background:#aea8d9;box-shadow:inset 2px 2px 0 #06042c,inset -1px -1px 0 #d6d2f8;"></div>
<span class="t" style="left:12.21px;top:202px;transform:scaleX(0.8750);">1</span>
<span class="t" style="left:11.69px;top:222px;transform:scaleX(1.0172);font-weight:bold;">2</span>
<div class="a" style="left:7px;top:405px;width:1260px;height:15px;background:repeating-conic-gradient(#dcd9f6 0 25%,#b2acde 0 50%) 0 0/2px 2px;"></div>
<div class="a btn" style="left:7px;top:405px;width:15px;height:15px;background:#aea8d9;"><svg width="15" height="15" viewBox="0 -0.5 15 15"><path d="M8 3v7l-4-3.500z" fill="#000"/></svg></div>
<div class="a btn" style="left:22px;top:405px;width:1160px;height:15px;background:#aea8d9;"></div>
<div class="a btn" style="left:1252px;top:405px;width:15px;height:15px;background:#aea8d9;"><svg width="15" height="15" viewBox="0 -0.5 15 15"><path d="M6 3v7l4-3.500z" fill="#000"/></svg></div>
<span class="t" style="left:10.59px;top:430px;transform:scaleX(0.8818);">Termelésirányítás:</span>
<div class="a sunk" style="left:96px;top:427px;width:213px;height:20px;background:#ccffb0;"></div>
<span class="t" style="left:101.74px;top:430px;transform:scaleX(0.8647);">Folyamatos</span>
<div class="a btn" style="left:292px;top:429px;width:16px;height:16px;background:#aea8d9;"><svg width="16" height="16" viewBox="0 0 16 16"><path d="M4 6h7l-3.500 4z" fill="#000"/></svg></div>
<span class="t" style="left:310.58px;top:430px;transform:scaleX(0.8726);">Összes átadandó darab:</span>
<div class="a sunk" style="left:425px;top:427px;width:213px;height:20px;background:#ccffb0;"></div>
<span class="t" style="left:428.63px;top:430px;transform:scaleX(0.9474);">0</span>
<span class="t" style="left:639.57px;top:430px;transform:scaleX(0.8758);">Összes átadandó menny.:</span>
<div class="a sunk" style="left:761px;top:427px;width:503px;height:20px;background:#ccffb0;"></div>
<span class="t" style="left:764.63px;top:430px;transform:scaleX(0.9474);">0</span>
<span class="t" style="left:10.32px;top:450px;transform:scaleX(0.8776);">Gyártás típus:</span>
<div class="a sunk" style="left:96px;top:447px;width:119px;height:20px;background:#ccffb0;"></div>
<span class="t" style="left:99.14px;top:450px;transform:scaleX(0.9143);">S</span>
<div class="a sunk" style="left:215px;top:447px;width:94px;height:20px;background:#ccffb0;"></div>
<span class="t" style="left:218.16px;top:450px;transform:scaleX(0.8731);">Saját</span>
<span class="t" style="left:310.14px;top:450px;transform:scaleX(0.8734);">Igénylő terület:</span>
<div class="a sunk" style="left:425px;top:447px;width:86px;height:20px;background:#ccffb0;"></div>
<span class="t" style="left:429.21px;top:450px;transform:scaleX(0.8750);">1</span>
<div class="a sunk" style="left:511px;top:447px;width:127px;height:20px;background:#ccffb0;"></div>
<span class="t" style="left:513.69px;top:450px;transform:scaleX(0.9069);">Belföld</span>
<span class="t" style="left:639.64px;top:450px;transform:scaleX(0.8710);">Igény verzió:</span>
<div class="a sunk" style="left:761px;top:447px;width:212px;height:20px;background:#ccffb0;"></div>
<span class="t" style="left:765.21px;top:450px;transform:scaleX(0.8750);">1</span>
<span class="t" style="left:974.26px;top:450px;transform:scaleX(0.8634);">Visszaig. verzió:</span>
<div class="a sunk" style="left:1050px;top:447px;width:214px;height:20px;background:#ccffb0;"></div>
<span class="t" style="left:9.97px;top:470px;transform:scaleX(0.8752);">Megjegyzés:</span>
<div class="a sunk" style="left:96px;top:467px;width:542px;height:20px;background:#ccffb0;"></div>
<span class="t" style="left:9.94px;top:490px;transform:scaleX(0.9134);">Rögzítette:</span>
<div class="a sunk" style="left:96px;top:487px;width:213px;height:20px;background:#ccffb0;"></div>
<span class="t" style="left:98.70px;top:490px;transform:scaleX(0.8984);">Demo</span>
<span class="t" style="left:310.19px;top:490px;transform:scaleX(0.9086);">Módosította:</span>
<div class="a sunk" style="left:425px;top:487px;width:213px;height:20px;background:#ccffb0;"></div>
<span class="t" style="left:639.74px;top:490px;transform:scaleX(0.8625);">Első visszaigazoló:</span>
<div class="a sunk" style="left:761px;top:487px;width:212px;height:20px;background:#ccffb0;"></div>
<span class="t" style="left:973.81px;top:490px;transform:scaleX(0.8803);">Utolsó visszaig.:</span>
<div class="a sunk" style="left:1050px;top:487px;width:214px;height:20px;background:#ccffb0;"></div>
<span class="t" style="left:9.94px;top:510px;transform:scaleX(0.9066);">Rögzítés:</span>
<div class="a sunk" style="left:96px;top:507px;width:213px;height:20px;background:#ccffb0;"></div>
<span class="t" style="left:99.06px;top:510px;transform:scaleX(0.8959);">2007-12-05T10:21:08</span>
<span class="t" style="left:310.20px;top:510px;transform:scaleX(0.8977);">Módosítás:</span>
<div class="a sunk" style="left:425px;top:507px;width:213px;height:20px;background:#ccffb0;"></div>
<span class="t" style="left:639.74px;top:510px;transform:scaleX(0.8609);">Első visszaigazolás:</span>
<div class="a sunk" style="left:761px;top:507px;width:212px;height:20px;background:#ccffb0;"></div>
<span class="t" style="left:973.81px;top:510px;transform:scaleX(0.8803);">Utolsó visszaig.:</span>
<div class="a sunk" style="left:1050px;top:507px;width:214px;height:20px;background:#ccffb0;"></div>
<div class="a" style="left:4px;top:533px;width:1265px;height:1px;background:#d6d2f8;"></div>
<div class="a" style="left:5px;top:536px;width:1264px;height:2px;background:#06042c;"></div>
<span class="t" style="left:5.10px;top:538px;transform:scaleX(0.8817);text-decoration:underline;text-decoration-skip-ink:none;text-underline-offset:1px;">Alapanyag szükséglet</span>
<div class="a sunk" style="left:7px;top:560px;width:13px;height:13px;background:#ccffb0;"></div>
<span class="t" style="left:23.06px;top:560px;transform:scaleX(0.8948);">Csak a kijelölt cikk anyagszükséglete</span>
<div class="a btn" style="left:1171px;top:555px;width:95px;height:24px;background:#aea8d9;"></div>
<span class="t" style="left:1203.73px;top:560px;transform:scaleX(0.8671);">Frissít</span>
<div class="a" style="left:5px;top:582px;width:1263px;height:186px;background:#aea8d9;box-shadow:inset 1px 1px 0 #3a3390,inset 2px 2px 0 #06042c,inset -1px -1px 0 #d6d2f8;"></div>
<div class="a" style="left:37px;top:604px;width:1230px;height:162px;background:#fff;"></div>
<div class="a hd" style="left:37px;top:584px;width:53px;height:20px;background:#aea8d9;"></div>
<span class="t" style="left:40.85px;top:587px;transform:scaleX(0.9150);">Áru kód</span>
<div class="a hd" style="left:90px;top:584px;width:53px;height:20px;background:#aea8d9;"></div>
<span class="t" style="left:94.35px;top:587px;transform:scaleX(0.8853);">Áru név</span>
<div class="a hd" style="left:143px;top:584px;width:37px;height:20px;background:#aea8d9;"></div>
<span class="t" style="left:146.68px;top:587px;transform:scaleX(0.9231);">ETK</span>
<div class="a hd" style="left:180px;top:584px;width:37px;height:20px;background:#aea8d9;"></div>
<span class="t" style="left:183.67px;top:587px;transform:scaleX(0.9343);">M.e.</span>
<div class="a hd" style="left:217px;top:584px;width:135px;height:20px;background:#aea8d9;"></div>
<span class="t" style="left:220.73px;top:587px;transform:scaleX(0.8685);">Norma szerinti mennyiség</span>
<div class="a hd" style="left:352px;top:584px;width:103px;height:20px;background:#aea8d9;"></div>
<span class="t" style="left:355.72px;top:587px;transform:scaleX(0.8761);">Készlet mennyiség</span>
<div class="a hd" style="left:455px;top:584px;width:100px;height:20px;background:#aea8d9;"></div>
<span class="t" style="left:458.73px;top:587px;transform:scaleX(0.8750);">Foglalt mennyiség</span>
<div class="a hd" style="left:555px;top:584px;width:121px;height:20px;background:#aea8d9;"></div>
<span class="t" style="left:558.62px;top:587px;transform:scaleX(0.8875);">Igénylendő mennyiség</span>
<div class="a" style="left:4px;top:773px;width:43px;height:16px;background:#aea8d9;box-shadow:inset 1px 1px 0 #665eb8,inset -1px -1px 0 #d6d2f8;"></div>
<div class="a" style="left:50px;top:773px;width:128px;height:16px;background:#aea8d9;box-shadow:inset 1px 1px 0 #665eb8,inset -1px -1px 0 #d6d2f8;"></div>
<div class="a" style="left:181px;top:773px;width:24px;height:16px;background:#aea8d9;box-shadow:inset 1px 1px 0 #665eb8,inset -1px -1px 0 #d6d2f8;"></div>
<div class="a" style="left:207px;top:773px;width:1061px;height:16px;background:#aea8d9;box-shadow:inset 1px 1px 0 #665eb8,inset -1px -1px 0 #d6d2f8;"></div>
<span class="s" style="left:6px;top:775px">-v1.94H</span>
<span class="s" style="left:52px;top:775px">2 / 2</span>
<span class="s" style="left:209px;top:775px">(*)[Gyártás indítás]-&gt;A dátum</span>
<div class="a" style="left:183px;top:775px;width:10px;height:11px;"><svg width="10" height="11" viewBox="0 0 10 11"><circle cx="5" cy="5.500" r="4.200" fill="#fff" stroke="#303040"/></svg></div>
</div>
</body></html>
